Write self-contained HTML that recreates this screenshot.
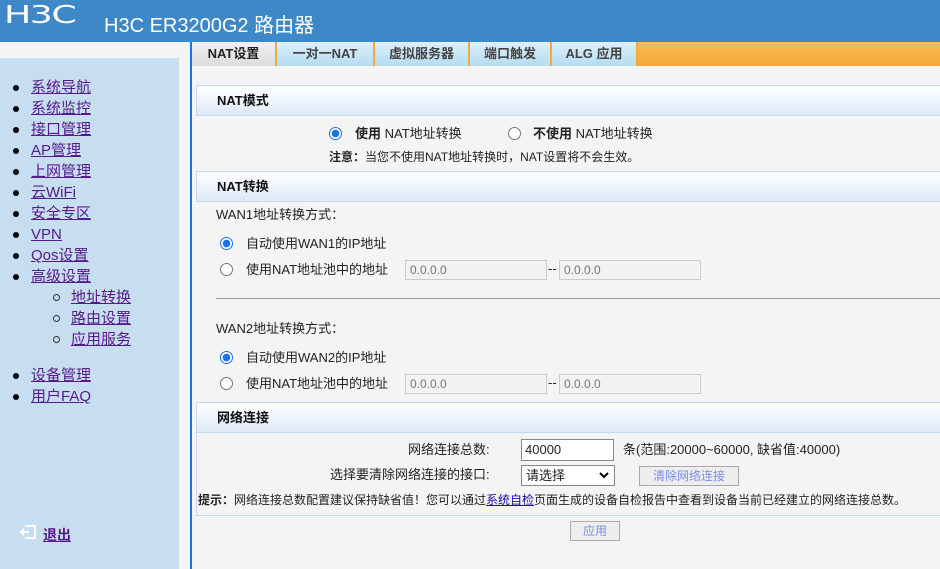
<!DOCTYPE html>
<html><head><meta charset="utf-8"><style>
*{margin:0;padding:0;box-sizing:border-box}
body{width:940px;height:569px;overflow:hidden;background:#f4f4f4;font-family:"Liberation Sans","Noto Sans CJK SC",sans-serif;font-size:13px;color:#222;position:relative}
.a{position:absolute}
#hd{left:0;top:0;width:940px;height:42px;background:#3e88c8;color:#fff}
#side{left:0;top:58px;width:179px;height:511px;background:#c7ddf0}
.nav{left:31px;font-size:15px;color:#551a8b;text-decoration:underline;line-height:21px}
.dot{width:6px;height:6px;border-radius:50%;background:#000}
.cir{width:7px;height:7px;border-radius:50%;border:1.3px solid #333}
.tab{top:42px;height:24px;background:linear-gradient(#dff0fa,#b3dcf0);border-right:2px solid #f4a93a;font-weight:bold;font-size:13px;color:#444;text-align:center;line-height:24px}
.sh{left:196px;width:744px;height:31px;background:linear-gradient(#fff,#dde9f7);border-top:1px solid #c5daf0;border-bottom:1px solid #c5daf0;border-left:1px solid #c5daf0;font-weight:bold;font-size:13px;padding-left:20px;line-height:30px;color:#111}
.rad{width:13px;height:13px;border-radius:50%;border:1px solid #777;background:#fff}
.rad.on{border:1px solid #1a73e8;background:radial-gradient(circle,#1a73e8 0 3.5px,#fff 4px)}
.inp{height:20px;border:1px solid #ccc;background:#f2f2f2;color:#777;font-size:12px;padding-left:4px;line-height:18px}
.t{font-size:13px;white-space:nowrap;line-height:15px}
</style></head><body>
<div id="hd" class="a">
<div class="a" style="left:4px;top:2px;font-size:25px;font-weight:normal;letter-spacing:-1px;transform:scaleX(1.45);transform-origin:left;font-family:'DejaVu Sans',sans-serif;line-height:26px">H3C</div>
<div class="a" style="left:104px;top:9px;font-size:20px">H3C ER3200G2 路由器</div>
</div>
<div id="side" class="a"></div>
<div class="a" style="left:190px;top:42px;width:2px;height:527px;background:#1a73e8"></div>

<div class="a dot" style="left:13px;top:85px"></div><div class="a nav" style="top:77px">系统导航</div>
<div class="a dot" style="left:13px;top:106px"></div><div class="a nav" style="top:98px">系统监控</div>
<div class="a dot" style="left:13px;top:127px"></div><div class="a nav" style="top:119px">接口管理</div>
<div class="a dot" style="left:13px;top:148px"></div><div class="a nav" style="top:140px">AP管理</div>
<div class="a dot" style="left:13px;top:169px"></div><div class="a nav" style="top:161px">上网管理</div>
<div class="a dot" style="left:13px;top:190px"></div><div class="a nav" style="top:182px">云WiFi</div>
<div class="a dot" style="left:13px;top:211px"></div><div class="a nav" style="top:203px">安全专区</div>
<div class="a dot" style="left:13px;top:232px"></div><div class="a nav" style="top:224px">VPN</div>
<div class="a dot" style="left:13px;top:253px"></div><div class="a nav" style="top:245px">Qos设置</div>
<div class="a dot" style="left:13px;top:274px"></div><div class="a nav" style="top:266px">高级设置</div>
<div class="a cir" style="left:53px;top:294px"></div><div class="a nav" style="left:71px;top:287px">地址转换</div>
<div class="a cir" style="left:53px;top:315px"></div><div class="a nav" style="left:71px;top:308px">路由设置</div>
<div class="a cir" style="left:53px;top:336px"></div><div class="a nav" style="left:71px;top:329px">应用服务</div>
<div class="a dot" style="left:13px;top:373px"></div><div class="a nav" style="top:365px">设备管理</div>
<div class="a dot" style="left:13px;top:394px"></div><div class="a nav" style="top:386px">用户FAQ</div>
<svg class="a" style="left:19px;top:524px" width="18" height="16"><path d="M6 2h10v12H6M10 8H2M5 5L2 8l3 3" fill="none" stroke="#fff" stroke-width="2"/></svg>
<div class="a" style="left:43px;top:525px;font-size:14px;font-weight:bold;color:#551a8b;text-decoration:underline">退出</div>

<div class="a" style="left:192px;top:42px;width:748px;height:24px;background:#f4a93a"></div>
<div class="a tab" style="left:192px;width:85px;background:linear-gradient(#f0f0f0,#dcdcdc);color:#222">NAT设置</div>
<div class="a tab" style="left:277px;width:98px">一对一NAT</div>
<div class="a tab" style="left:375px;width:95px">虚拟服务器</div>
<div class="a tab" style="left:470px;width:82px">端口触发</div>
<div class="a tab" style="left:552px;width:86px">ALG 应用</div>
<div class="a" style="left:638px;top:42px;width:302px;height:24px;background:linear-gradient(#f8bd55,#f4a93a)"></div>

<div class="a sh" style="top:85px">NAT模式</div>
<div class="a rad on" style="left:329px;top:127px"></div>
<div class="a t" style="left:355px;top:126px"><b>使用</b> NAT地址转换</div>
<div class="a rad" style="left:508px;top:127px"></div>
<div class="a t" style="left:533px;top:126px"><b>不使用</b> NAT地址转换</div>
<div class="a t" style="left:329px;top:150px;font-size:12px"><b>注意：</b>当您不使用NAT地址转换时，NAT设置将不会生效。</div>

<div class="a sh" style="top:171px">NAT转换</div>
<div class="a t" style="left:216px;top:207px">WAN1地址转换方式：</div>
<div class="a rad on" style="left:220px;top:237px"></div>
<div class="a t" style="left:246px;top:236px">自动使用WAN1的IP地址</div>
<div class="a rad" style="left:220px;top:263px"></div>
<div class="a t" style="left:246px;top:262px">使用NAT地址池中的地址</div>
<div class="a inp" style="left:405px;top:260px;width:142px">0.0.0.0</div>
<div class="a t" style="left:548px;top:261px">--</div>
<div class="a inp" style="left:559px;top:260px;width:142px">0.0.0.0</div>
<div class="a" style="left:216px;top:298px;width:724px;height:1px;background:#999"></div>
<div class="a t" style="left:216px;top:321px">WAN2地址转换方式：</div>
<div class="a rad on" style="left:220px;top:351px"></div>
<div class="a t" style="left:246px;top:350px">自动使用WAN2的IP地址</div>
<div class="a rad" style="left:220px;top:377px"></div>
<div class="a t" style="left:246px;top:376px">使用NAT地址池中的地址</div>
<div class="a inp" style="left:405px;top:374px;width:142px">0.0.0.0</div>
<div class="a t" style="left:548px;top:375px">--</div>
<div class="a inp" style="left:559px;top:374px;width:142px">0.0.0.0</div>

<div class="a sh" style="top:402px">网络连接</div>
<div class="a t" style="left:408px;top:442px">网络连接总数:</div>
<div class="a" style="left:521px;top:439px;width:93px;height:22px;border:1px solid #888;background:#fff;font-size:13px;padding-left:3px;line-height:20px">40000</div>
<div class="a t" style="left:623px;top:442px">条(范围:20000~60000, 缺省值:40000)</div>
<div class="a t" style="left:330px;top:467px">选择要清除网络连接的接口:</div>
<div class="a" style="left:521px;top:465px;width:94px;height:21px;border:1px solid #888;background:#fff;font-size:13px;padding-left:4px;line-height:19px">请选择<svg style="position:absolute;right:5px;top:6px" width="10" height="7"><path d="M1 1l4 4 4-4" fill="none" stroke="#000" stroke-width="2"/></svg></div>
<div class="a" style="left:639px;top:466px;width:100px;height:20px;border:1px solid #aaa;background:#eee;color:#7a8ee8;font-size:12px;text-align:center;line-height:18px">清除网络连接</div>
<div class="a t" style="left:198px;top:493px;font-size:12px"><b>提示：</b>网络连接总数配置建议保持缺省值！您可以通过<span style="color:#1a0dab;text-decoration:underline">系统自检</span>页面生成的设备自检报告中查看到设备当前已经建立的网络连接总数。</div>
<div class="a" style="left:196px;top:515px;width:744px;height:1px;background:#c5daf0"></div>
<div class="a" style="left:196px;top:402px;width:1px;height:114px;background:#c5daf0"></div>
<div class="a" style="left:570px;top:521px;width:50px;height:20px;border:1px solid #aaa;background:#eee;color:#7a8ee8;font-size:12px;text-align:center;line-height:18px">应用</div>
</body></html>
